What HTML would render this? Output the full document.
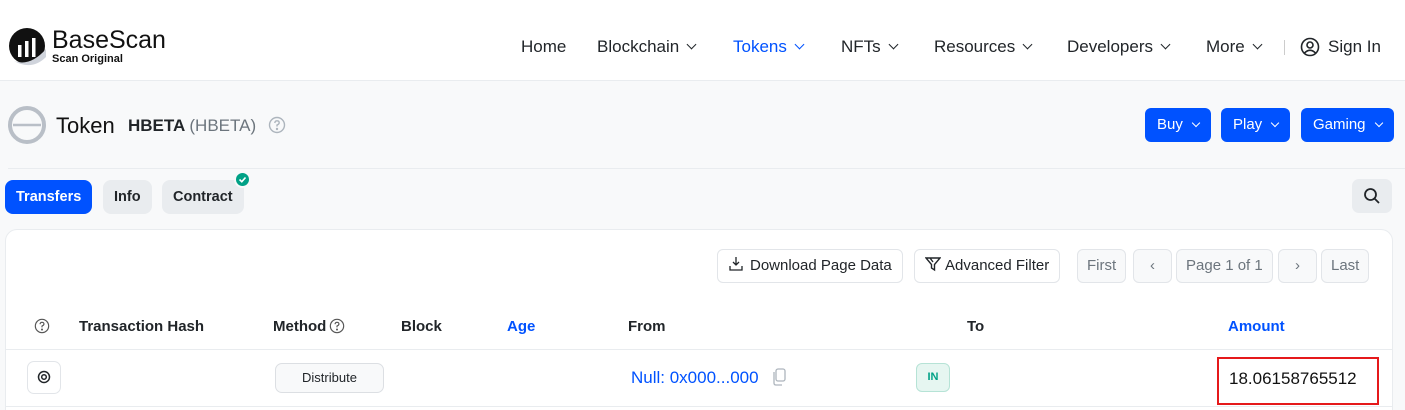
<!DOCTYPE html>
<html><head><meta charset="utf-8"><style>
*{box-sizing:border-box;margin:0;padding:0}
html,body{width:1405px;height:410px;overflow:hidden}
body{background:#f8f9fa;font-family:"Liberation Sans",sans-serif;color:#212529;position:relative}
.a{position:absolute;white-space:nowrap}
.nav{font-size:17px;top:37px;color:#212529}
.chev{display:inline-block;width:7px;height:7px;border-right:1.6px solid currentColor;border-bottom:1.6px solid currentColor;transform:rotate(45deg);margin-left:9px;position:relative;top:-4px}
.btnb{background:#0052ff;color:#fff;border-radius:6px;font-size:15px;height:34px;top:108px;line-height:34px;padding:0 12px}
.btnb .chev{width:6px;height:6px;margin-left:10px;top:-3px}
.pill{top:180px;height:34px;line-height:34px;border-radius:8px;font-size:14.5px;font-weight:bold;padding:0 11px;background:#e9ecef;color:#212529}
.ob{top:249px;height:34px;line-height:32px;border:1px solid #e2e5e9;border-radius:6px;font-size:15px;background:#fff;padding:0 10px}
.gb{top:249px;height:34px;line-height:32px;border:1px solid #e2e5e9;border-radius:6px;font-size:15px;background:#f8f9fa;color:#6c757d;padding:0 9px}
.th{top:318px;font-size:15px;font-weight:bold}
</style></head><body>
<div class="a" style="left:0;top:0;width:1405px;height:81px;background:#fff;border-bottom:1px solid #e9ecef"></div>
<svg class="a" style="left:8px;top:27px" width="40" height="40" viewBox="0 0 40 40"><circle cx="19" cy="19" r="18" fill="#111"/><path d="M6 34 Q22 40 38 22 L38 30 Q24 44 6 34Z" fill="#d0d4dc"/><rect x="10" y="18" width="3.5" height="12" fill="#fff"/><rect x="17" y="14" width="3.5" height="16" fill="#fff"/><rect x="24" y="11" width="3.5" height="19" fill="#fff"/></svg>
<div class="a" style="left:52px;top:26px;font-size:25px;color:#111">BaseScan</div>
<div class="a" style="left:52px;top:53px;font-size:11px;font-weight:bold;color:#111">Scan Original</div>
<div class="a nav" style="left:521px">Home</div>
<div class="a nav" style="left:597px">Blockchain<span class="chev"></span></div>
<div class="a nav" style="left:733px;color:#0052ff">Tokens<span class="chev"></span></div>
<div class="a nav" style="left:841px">NFTs<span class="chev"></span></div>
<div class="a nav" style="left:934px">Resources<span class="chev"></span></div>
<div class="a nav" style="left:1067px">Developers<span class="chev"></span></div>
<div class="a nav" style="left:1206px">More<span class="chev"></span></div>
<div class="a" style="left:1284px;top:40px;width:1px;height:15px;background:#ccc"></div>
<svg class="a" style="left:1300px;top:37px" width="20" height="20" viewBox="0 0 20 20" fill="none" stroke="#212529" stroke-width="1.6"><circle cx="10" cy="10" r="8.5"/><circle cx="10" cy="8" r="3"/><path d="M4.5 16 Q10 10.5 15.5 16"/></svg>
<div class="a nav" style="left:1328px">Sign In</div>

<svg class="a" style="left:7px;top:105px" width="40" height="40" viewBox="0 0 40 40"><circle cx="20" cy="20" r="17" fill="none" stroke="#b9bfc7" stroke-width="4"/><path d="M6 20 H34" stroke="#b9bfc7" stroke-width="2.5"/></svg>
<div class="a" style="left:56px;top:113px;font-size:22px;color:#111">Token</div>
<div class="a" style="left:128px;top:116px;font-size:17px;font-weight:bold;color:#212529">HBETA <span style="font-weight:normal;color:#6c757d">(HBETA)</span></div>
<svg class="a" style="left:268px;top:116px" width="18" height="18" viewBox="0 0 18 18" fill="none" stroke="#adb5bd" stroke-width="1.4"><circle cx="9" cy="9" r="7.5"/><path d="M6.8 7 Q7 4.8 9 4.8 Q11.2 4.8 11.2 6.8 Q11.2 8.2 9 9 V10.5"/><circle cx="9" cy="13" r=".5" fill="#adb5bd"/></svg>
<div class="a btnb" style="left:1145px">Buy<span class="chev"></span></div>
<div class="a btnb" style="left:1221px">Play<span class="chev"></span></div>
<div class="a btnb" style="left:1301px">Gaming<span class="chev"></span></div>
<div class="a" style="left:8px;top:168px;width:1397px;height:1px;background:#e9ecef"></div>

<div class="a pill" style="left:5px;background:#0052ff;color:#fff">Transfers</div>
<div class="a pill" style="left:103px">Info</div>
<div class="a pill" style="left:162px">Contract</div>
<div class="a" style="left:234px;top:171px;width:17px;height:17px;border-radius:50%;background:#00a186;border:2px solid #f8f9fa"></div>
<svg class="a" style="left:238px;top:175px" width="9" height="9" viewBox="0 0 9 9" fill="none" stroke="#fff" stroke-width="1.6"><path d="M1.5 4.5 L3.8 6.7 L7.5 2.5"/></svg>
<div class="a" style="left:1352px;top:179px;width:40px;height:34px;border-radius:7px;background:#e9ecef"></div>
<svg class="a" style="left:1363px;top:187px" width="18" height="18" viewBox="0 0 18 18" fill="none" stroke="#212529" stroke-width="1.8"><circle cx="7.5" cy="7.5" r="5.5"/><path d="M11.5 11.5 L16 16"/></svg>

<div class="a" style="left:5px;top:229px;width:1388px;height:200px;background:#fff;border:1px solid #e9ecef;border-radius:12px"></div>
<div class="a ob" style="left:717px"><svg width="16" height="16" viewBox="0 0 16 16" fill="none" stroke="#212529" stroke-width="1.3" style="vertical-align:-2px;margin-right:6px"><path d="M8 1 V9 M5 6 L8 9 L11 6 M2 10 V14 H14 V10"/></svg>Download Page Data</div>
<div class="a ob" style="left:914px"><svg width="16" height="16" viewBox="0 0 16 16" fill="none" stroke="#212529" stroke-width="1.4" style="vertical-align:-2px;margin-right:4px"><path d="M1 2 H15 L9.5 8.5 V14 L6.5 12 V8.5 Z M5 2 L8 6"/></svg>Advanced Filter</div>
<div class="a gb" style="left:1077px">First</div>
<div class="a gb" style="left:1133px;width:39px;text-align:center">‹</div>
<div class="a gb" style="left:1176px">Page 1 of 1</div>
<div class="a gb" style="left:1278px;width:39px;text-align:center">›</div>
<div class="a gb" style="left:1321px">Last</div>

<svg class="a" style="left:34px;top:318px" width="16" height="16" viewBox="0 0 18 18" fill="none" stroke="#555" stroke-width="1.3"><circle cx="9" cy="9" r="7.5"/><path d="M6.8 7 Q7 4.8 9 4.8 Q11.2 4.8 11.2 6.8 Q11.2 8.2 9 9 V10.5"/><circle cx="9" cy="13" r=".5"/></svg>
<div class="a th" style="left:79px">Transaction Hash</div>
<div class="a th" style="left:273px">Method</div>
<svg class="a" style="left:329px;top:318px" width="16" height="16" viewBox="0 0 18 18" fill="none" stroke="#555" stroke-width="1.3"><circle cx="9" cy="9" r="7.5"/><path d="M6.8 7 Q7 4.8 9 4.8 Q11.2 4.8 11.2 6.8 Q11.2 8.2 9 9 V10.5"/><circle cx="9" cy="13" r=".5"/></svg>
<div class="a th" style="left:401px">Block</div>
<div class="a th" style="left:507px;color:#0052ff">Age</div>
<div class="a th" style="left:628px">From</div>
<div class="a th" style="left:967px">To</div>
<div class="a th" style="left:1228px;color:#0052ff">Amount</div>
<div class="a" style="left:6px;top:349px;width:1386px;height:1px;background:#e9ecef"></div>
<div class="a" style="left:6px;top:406px;width:1386px;height:1px;background:#e9ecef"></div>

<div class="a" style="left:27px;top:361px;width:34px;height:33px;border:1px solid #e2e5e9;border-radius:7px;background:#fff"></div>
<svg class="a" style="left:37px;top:370px" width="14" height="14" viewBox="0 0 14 14" fill="none" stroke="#212529" stroke-width="1.5"><circle cx="7" cy="7" r="5.5"/><circle cx="7" cy="7" r="2.3"/></svg>
<div class="a" style="left:275px;top:363px;width:109px;height:30px;border:1px solid #dcdfe3;border-radius:7px;background:#f8f9fa;font-size:13px;text-align:center;line-height:28px">Distribute</div>
<div class="a" style="left:631px;top:368px;font-size:17px;color:#0052ff">Null: 0x000...000</div>
<svg class="a" style="left:771px;top:368px" width="16" height="18" viewBox="0 0 16 18" fill="none" stroke="#adb5bd" stroke-width="1.3"><rect x="5" y="1" width="9" height="12" rx="2"/><path d="M3 4 V15 Q3 17 5 17 H11"/></svg>
<div class="a" style="left:916px;top:363px;width:34px;height:29px;border:1px solid #b6e3d6;border-radius:6px;background:#e6f6f1;color:#00a186;font-size:11px;font-weight:bold;text-align:center;line-height:27px">IN</div>
<div class="a" style="left:1217px;top:357px;width:162px;height:48px;border:2px solid #e5191b"></div>
<div class="a" style="left:1229px;top:369px;font-size:17px;color:#111">18.06158765512</div>
</body></html>
